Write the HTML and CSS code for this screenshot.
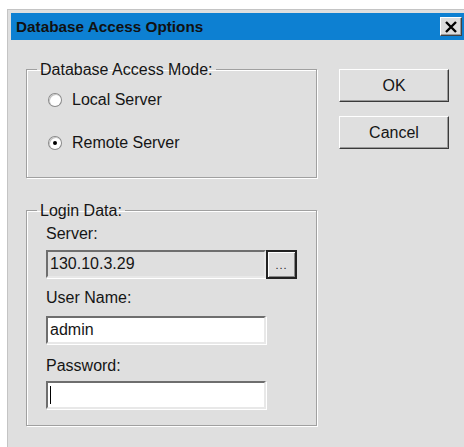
FILE: index.html
```html
<!DOCTYPE html>
<html>
<head>
<meta charset="utf-8">
<link rel="stylesheet" href="styles.css">
</head>
<body>
<div class="window">
  <div class="titlebar">
    <span class="title">Database Access Options</span>
    <span class="close">
      <svg width="14" height="12" viewBox="0 0 14 12"><path d="M2 1 L12 11 M12 1 L2 11" stroke="#000" stroke-width="2.4" fill="none"/></svg>
    </span>
  </div>
  <div class="content">
    <div class="left">
      <fieldset class="group mode">
        <legend>Database Access Mode:</legend>
        <div class="inner">
          <label class="radio"><span class="dot"></span>Local Server</label>
          <label class="radio"><span class="dot on"></span>Remote Server</label>
        </div>
      </fieldset>
      <fieldset class="group login">
        <legend>Login Data:</legend>
        <div class="inner">
          <div class="lbl first">Server:</div>
          <div class="row">
            <div class="field disabled">130.10.3.29</div>
            <div class="browse">...</div>
          </div>
          <div class="lbl">User Name:</div>
          <div class="field">admin</div>
          <div class="lbl pw">Password:</div>
          <div class="field"><span class="caret"></span></div>
        </div>
      </fieldset>
    </div>
    <div class="right">
      <div class="btn">OK</div>
      <div class="btn">Cancel</div>
    </div>
  </div>
</div>
</body>
</html>
```
FILE: styles.css
```css
html, body {
  margin: 0;
  background: #fff;
  font-family: "Liberation Sans", Arial, sans-serif;
  font-size: 16px;
  color: #151515;
}
.window {
  margin: 9px 0 0 7px;
  height: 438px;
  background: #dfdfdf;
  border-top: 1px solid #c4c4c4;
  border-left: 1px solid #c4c4c4;
  padding: 3px 0 0 3px;
  box-sizing: border-box;
}
.titlebar {
  height: 27px;
  background: #0d80d2;
  display: flex;
  align-items: center;
  justify-content: space-between;
  padding: 0 2px 0 5px;
}
.title {
  font-weight: bold;
  font-size: 15.3px;
  color: #111;
}
.close {
  width: 22px;
  height: 19px;
  box-sizing: border-box;
  background: #dcdcdc;
  border: 1px solid;
  border-color: #fff #404040 #404040 #fff;
  box-shadow: inset -1px -1px 0 #9a9a9a;
  display: flex;
  align-items: center;
  justify-content: center;
}
.content {
  display: flex;
  padding: 21px 0 0 15px;
}
.left {
  width: 291px;
  display: flex;
  flex-direction: column;
  gap: 24px;
}
.group {
  margin: 0;
  border: 1px solid #a0a0a0;
  box-shadow: inset 1px 1px 0 #fff, 1px 1px 0 #fff;
  padding: 0;
  box-sizing: border-box;
}
.group legend {
  margin-left: 10px;
  padding: 0 3px;
  line-height: 17px;
}
.mode {
  height: 117px;
}
.mode .inner {
  padding: 13px 0 0 22px;
}
.radio {
  display: flex;
  align-items: center;
  gap: 11px;
  height: 18px;
  margin-bottom: 25px;
}
.dot {
  width: 12px;
  height: 12px;
  border-radius: 50%;
  background: #fff;
  box-shadow: 0 0 0 1px #8a8a8a, inset 1px 1px 0 #c0c0c0;
  position: relative;
}
.dot.on::after {
  content: "";
  position: absolute;
  left: 4px;
  top: 4px;
  width: 4px;
  height: 4px;
  border-radius: 50%;
  background: #000;
}
.login {
  height: 224px;
}
.login .inner {
  padding-left: 19px;
}
.lbl {
  height: 18px;
  line-height: 18px;
  margin-top: 10px;
  margin-bottom: 9px;
}
.lbl.first {
  margin-top: 6px;
  margin-bottom: 7px;
}
.lbl.pw {
  margin-top: 13px;
  margin-bottom: 6px;
}
.row {
  display: flex;
}
.field {
  width: 220px;
  height: 28px;
  box-sizing: border-box;
  background: #fff;
  border: 2px solid;
  border-color: #6e6e6e #e8e8e8 #e8e8e8 #6e6e6e;
  box-shadow: 1px 1px 0 #fff;
  padding: 0 2px;
  display: flex;
  align-items: center;
}
.field.disabled { background: #dfdfdf; }
.caret {
  width: 1px;
  height: 18px;
  background: #000;
}
.browse {
  width: 31px;
  height: 29px;
  box-sizing: border-box;
  border: 2px solid #222;
  background: #dfdfdf;
  box-shadow: inset 1px 1px 0 #fff, inset -1px -1px 0 #888;
  display: flex;
  align-items: flex-end;
  justify-content: center;
  padding-bottom: 6px;
  font-size: 11px;
  line-height: 11px;
  letter-spacing: 1px;
}
.right {
  display: flex;
  flex-direction: column;
  gap: 14px;
  margin-left: 22px;
  padding-top: 8px;
}
.btn {
  width: 110px;
  height: 33px;
  box-sizing: border-box;
  border: 1px solid;
  border-color: #fff #3a3a3a #3a3a3a #fff;
  box-shadow: inset -1px -1px 0 #9a9a9a;
  display: flex;
  align-items: center;
  justify-content: center;
  font-size: 16px;
}
```
